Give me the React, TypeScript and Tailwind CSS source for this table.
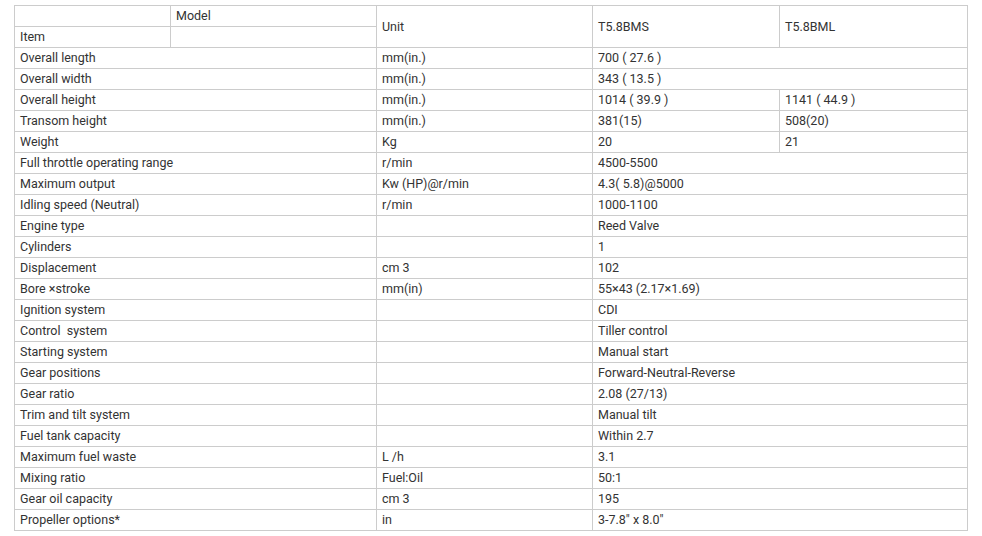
type Row = { item: string; unit: string; a: string; b?: string };

const rows: Row[] = [
  { item: "Overall length", unit: "mm(in.)", a: "700 ( 27.6 )" },
  { item: "Overall width", unit: "mm(in.)", a: "343 ( 13.5 )" },
  { item: "Overall height", unit: "mm(in.)", a: "1014 ( 39.9 )", b: "1141 ( 44.9 )" },
  { item: "Transom height", unit: "mm(in.)", a: "381(15)", b: "508(20)" },
  { item: "Weight", unit: "Kg", a: "20", b: "21" },
  { item: "Full throttle operating range", unit: "r/min", a: "4500-5500" },
  { item: "Maximum output", unit: "Kw (HP)@r/min", a: "4.3( 5.8)@5000" },
  { item: "Idling speed (Neutral)", unit: "r/min", a: "1000-1100" },
  { item: "Engine type", unit: "", a: "Reed Valve" },
  { item: "Cylinders", unit: "", a: "1" },
  { item: "Displacement", unit: "cm 3", a: "102" },
  { item: "Bore ×stroke", unit: "mm(in)", a: "55×43 (2.17×1.69)" },
  { item: "Ignition system", unit: "", a: "CDI" },
  { item: "Control  system", unit: "", a: "Tiller control" },
  { item: "Starting system", unit: "", a: "Manual start" },
  { item: "Gear positions", unit: "", a: "Forward-Neutral-Reverse" },
  { item: "Gear ratio", unit: "", a: "2.08 (27/13)" },
  { item: "Trim and tilt system", unit: "", a: "Manual tilt" },
  { item: "Fuel tank capacity", unit: "", a: "Within 2.7" },
  { item: "Maximum fuel waste", unit: "L /h", a: "3.1" },
  { item: "Mixing ratio", unit: "Fuel:Oil", a: "50:1" },
  { item: "Gear oil capacity", unit: "cm 3", a: "195" },
  { item: "Propeller options*", unit: "in", a: '3-7.8" x 8.0"' },
];

const cell = "border border-[#cccccc] px-[5px] py-0 h-[21px] align-middle whitespace-pre";

export default function App() {
  return (
    <div className="min-h-screen bg-white pt-[5px] pl-[14px] font-['Roboto',sans-serif] text-[12.5px] leading-[20px] text-[#333333]">
      <table className="table-fixed border-collapse w-[954px]">
        <colgroup>
          <col className="w-[156px]" />
          <col className="w-[206px]" />
          <col className="w-[216px]" />
          <col className="w-[187px]" />
          <col className="w-[188px]" />
        </colgroup>
        <tbody>
          <tr>
            <td className={cell}></td>
            <td className={cell}>Model</td>
            <td className={cell} rowSpan={2}>Unit</td>
            <td className={cell} rowSpan={2}>T5.8BMS</td>
            <td className={cell} rowSpan={2}>T5.8BML</td>
          </tr>
          <tr>
            <td className={cell}>Item</td>
            <td className={cell}></td>
          </tr>
          {rows.map((r) => (
            <tr key={r.item}>
              <td className={cell} colSpan={2}>{r.item}</td>
              <td className={cell}>{r.unit}</td>
              {r.b ? (
                <>
                  <td className={cell}>{r.a}</td>
                  <td className={cell}>{r.b}</td>
                </>
              ) : (
                <td className={cell} colSpan={2}>{r.a}</td>
              )}
            </tr>
          ))}
        </tbody>
      </table>
    </div>
  );
}
